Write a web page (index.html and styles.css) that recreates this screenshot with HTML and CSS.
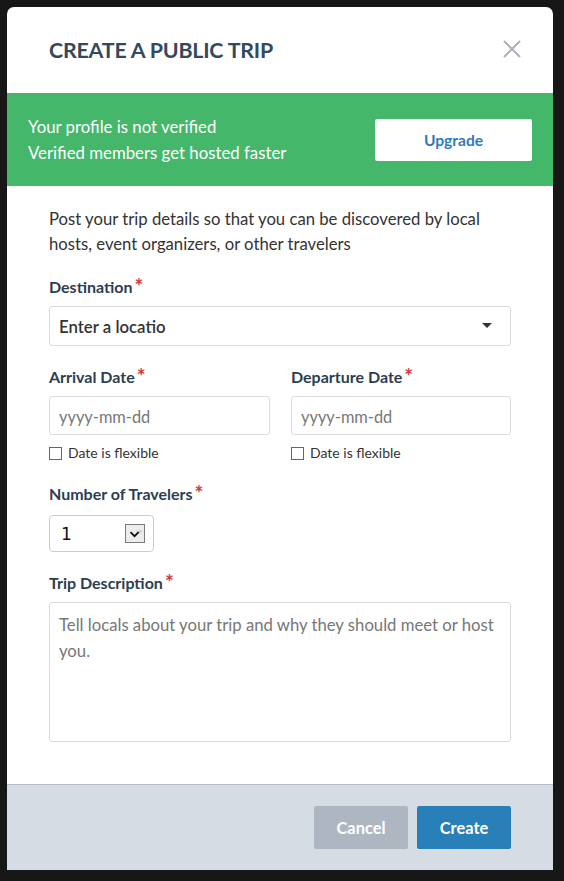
FILE: index.html
```
<!DOCTYPE html>
<html lang="en">
<head>
<meta charset="utf-8">
<title>Create a public trip</title>
<link rel="stylesheet" href="styles.css">
</head>
<body>
<div class="modal">
  <div class="modal-header">
    <h1 class="title">CREATE A PUBLIC TRIP</h1>
    <button class="close" aria-label="Close">
      <svg width="18" height="18" viewBox="0 0 18 18"><path d="M1 1L17 17M17 1L1 17" stroke="#aab2bd" stroke-width="2" fill="none"/></svg>
    </button>
  </div>
  <div class="banner">
    <div class="banner-text">
      <div>Your profile is not verified</div>
      <div>Verified members get hosted faster</div>
    </div>
    <button class="upgrade">Upgrade</button>
  </div>
  <div class="modal-body">
    <p class="intro">Post your trip details so that you can be discovered by local hosts, event organizers, or other travelers</p>

    <div class="label">Destination<span class="req">*</span></div>
    <div class="field select-field">
      <span class="select-value">Enter a locatio</span>
      <svg class="caret" width="10" height="6" viewBox="0 0 10 6"><path d="M0 0H10L5 5Z" fill="#333"/></svg>
    </div>

    <div class="two-col">
      <div class="col">
        <div class="label label-date">Arrival Date<span class="req">*</span></div>
        <div class="field date-field"><span class="placeholder">yyyy-mm-dd</span></div>
        <label class="check"><span class="box"></span>Date is flexible</label>
      </div>
      <div class="col">
        <div class="label label-date">Departure Date<span class="req">*</span></div>
        <div class="field date-field"><span class="placeholder">yyyy-mm-dd</span></div>
        <label class="check"><span class="box"></span>Date is flexible</label>
      </div>
    </div>

    <div class="label label-num">Number of Travelers<span class="req">*</span></div>
    <div class="num-select">
      <span class="num-value">1</span>
      <span class="num-arrow">
        <svg width="20" height="18" viewBox="0 0 20 18">
          <path d="M11 5H19L15 9Z" fill="#c9ccd1"/>
          <path d="M5 7L9.5 11.5L14 7" stroke="#111" stroke-width="2" fill="none"/>
        </svg>
      </span>
    </div>

    <div class="label label-desc">Trip Description<span class="req">*</span></div>
    <div class="textarea"><span class="placeholder ta-text">Tell locals about your trip and why they should meet or host you.</span></div>
  </div>
  <div class="modal-footer">
    <button class="btn btn-cancel">Cancel</button>
    <button class="btn btn-create">Create</button>
  </div>
</div>
</body>
</html>
```
FILE: styles.css
```
* { box-sizing: border-box; }
html, body { margin: 0; }
body {
  background: #171717;
  padding: 7px;
  font-family: Lato, "Open Sans", sans-serif;
  height: 881px;
  overflow: hidden;
}
.modal {
  width: 546px;
  background: #fff;
  border-radius: 7px 7px 0 0;
  overflow: hidden;
}
.modal-header {
  height: 86px;
  display: flex;
  align-items: center;
  justify-content: space-between;
  padding: 0 32px 0 42px;
}
.title {
  margin: 0;
  font-size: 21.4px;
  font-weight: 700;
  color: #34495e;
  letter-spacing: -0.2px;
}
.close {
  background: none;
  border: 0;
  padding: 0;
  width: 18px;
  height: 18px;
  display: flex;
  margin-bottom: 2px;
}
.banner {
  height: 93px;
  background: #45b76a;
  display: flex;
  align-items: center;
  justify-content: space-between;
  padding: 0 21px;
}
.banner-text {
  color: #fff;
  font-size: 16.8px;
  line-height: 26px;
}
.upgrade {
  width: 157px;
  height: 42px;
  background: #fff;
  border: 0;
  border-radius: 2px;
  font-family: Lato, sans-serif;
  font-weight: 700;
  font-size: 15.6px;
  color: #2d7bb7;
}
.modal-body {
  padding: 21px 42px 42px;
}
.intro {
  margin: 0;
  font-size: 16.7px;
  line-height: 25px;
  color: #333;
}
.label {
  font-size: 16px;
  font-weight: 700;
  color: #2c3e50;
  line-height: 20px;
  height: 20px;
  margin-top: 20px;
  margin-bottom: 9px;
}
.req {
  display: inline-block;
  vertical-align: top;
  color: #d0383f;
  margin-left: 2px;
  font-size: 21px;
  line-height: 21px;
  margin-top: -2px;
}
.field {
  border: 1px solid #dcdcdc;
  border-radius: 3px;
  height: 40px;
  display: flex;
  align-items: center;
  padding: 0 9px;
}
.select-field { justify-content: space-between; padding-right: 18px; }
.select-value { font-size: 16.8px; font-weight: 600; color: #333; }
.caret { display: block; }
.two-col {
  display: grid;
  grid-template-columns: 221px 220px;
  column-gap: 21px;
}
.label-date { margin-top: 21px; }
.date-field { height: 39px; padding-top: 2px; }
.placeholder { color: #777; font-size: 16.4px; }
.check {
  display: flex;
  align-items: center;
  margin-top: 9px;
  font-size: 14px;
  line-height: 18px;
  color: #333;
}
.box {
  width: 13px;
  height: 13px;
  border: 1px solid #666;
  margin-right: 6px;
  background: #fff;
}
.label-num { margin-top: 22px; margin-bottom: 11px; }
.num-select {
  width: 105px;
  height: 37px;
  border: 1px solid #ccc;
  border-radius: 4px;
  display: flex;
  align-items: center;
  justify-content: space-between;
  padding: 0 8px 0 11px;
}
.num-value { font-family: "DejaVu Sans", sans-serif; font-size: 17px; color: #111; }
.num-arrow {
  width: 20px;
  height: 19px;
  border: 1px solid #7a7a7a;
  background: #ececec;
  display: flex;
}
.label-desc { margin-top: 21px; }
.textarea {
  height: 140px;
  border: 1px solid #dcdcdc;
  border-radius: 3px;
  padding: 9px 9px;
  line-height: 26px;
}
.ta-text { font-size: 16.7px; }
.modal-footer {
  height: 86px;
  background: #d5dce3;
  border-top: 1px solid #b4bcc4;
  display: flex;
  justify-content: flex-end;
  align-items: flex-start;
  gap: 9px;
  padding: 21px 42px 0;
}
.btn {
  width: 94px;
  height: 43px;
  border: 0;
  border-radius: 2px;
  color: #fff;
  font-family: Lato, sans-serif;
  font-weight: 700;
  font-size: 16.4px;
}
.btn-cancel { background: #aeb6c2; }
.btn-create { background: #2980b9; }
```
